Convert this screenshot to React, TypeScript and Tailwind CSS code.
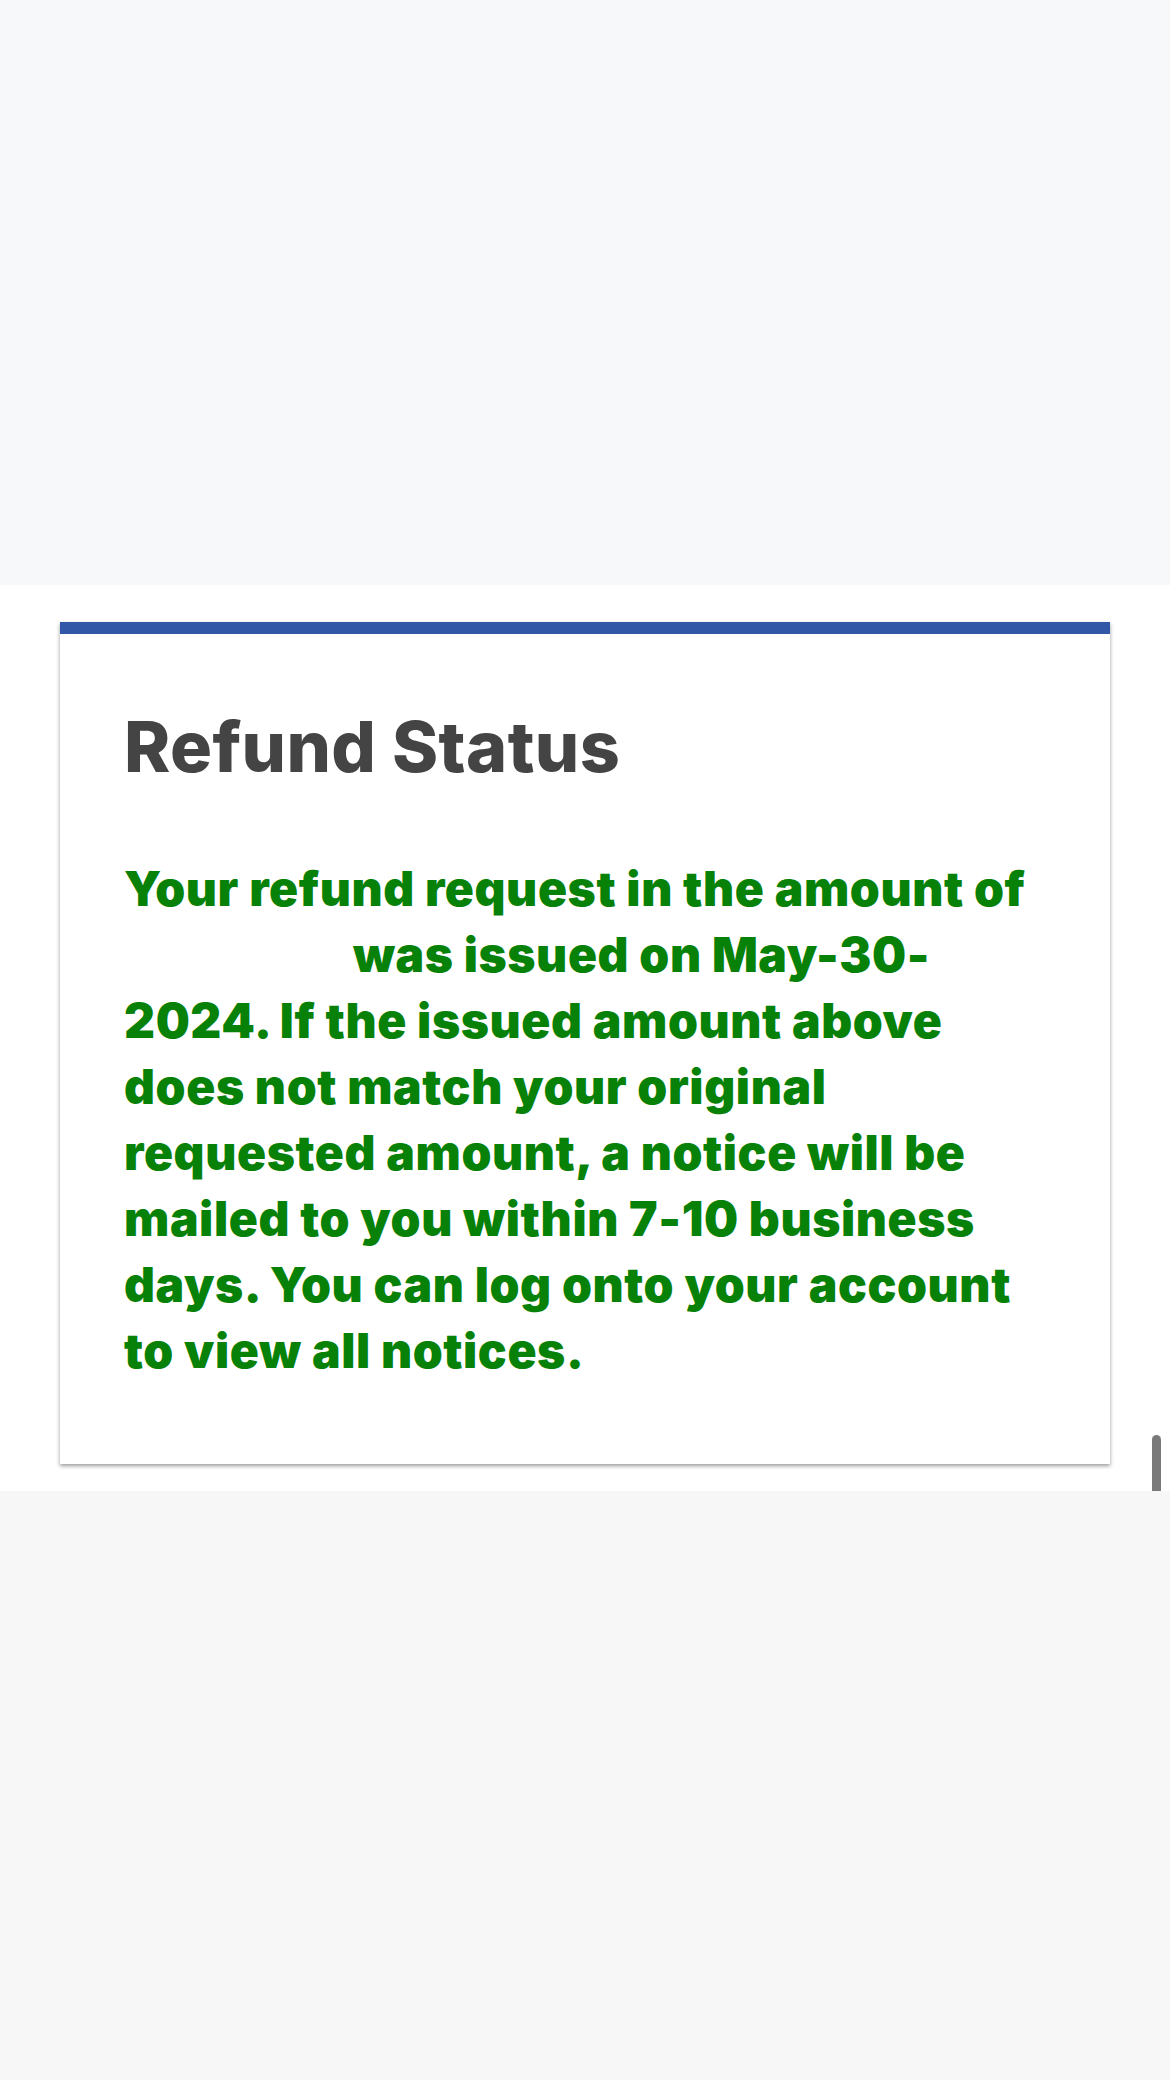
export default function App() {
  return (
    <div className="flex min-h-[2080px] flex-col bg-[#f7f7f8] font-['Inter','Liberation_Sans',sans-serif]">
      <div className="h-[585px] bg-[#f7f8fa]" />

      <section className="relative bg-white pt-[37px] pb-[27px]">
        <div className="ml-[60px] w-[1050px] border-t-[12px] border-[#3157a6] bg-white px-[64px] pt-[71px] pb-[80px] shadow-[0_2px_4px_rgba(0,0,0,0.4)]">
          <h1 className="text-[70px] leading-[84px] font-extrabold tracking-[0.4px] text-[#444444]">
            Refund Status
          </h1>
          <p className="mt-[67px] text-[48px] leading-[66px] font-black tracking-[0.6px] text-[#078107]">
            Your refund request in the amount of
            <br />
            <span className="inline-block w-[229px] text-white">&nbsp;</span>
            was issued on May-30-
            <br />
            2024. If the issued amount above
            <br />
            does not match your original
            <br />
            requested amount, a notice will be
            <br />
            mailed to you within 7-10 business
            <br />
            days. You can log onto your account
            <br />
            to view all notices.
          </p>
        </div>

        <div className="absolute right-[9px] bottom-0 h-[56px] w-[9px] rounded-t-full bg-[#7a7a7a]" />
      </section>

      <div className="flex-1 bg-[#f7f7f8]" />
    </div>
  );
}
